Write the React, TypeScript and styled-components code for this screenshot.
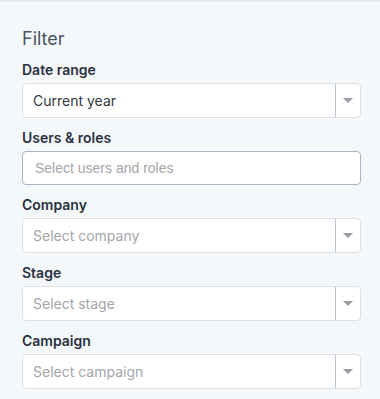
import React from "react";
import styled, { createGlobalStyle } from "styled-components";

const GlobalStyle = createGlobalStyle`
  html, body { margin: 0; padding: 0; }
  body {
    background: #f5f8fb;
    font-family: Inter, "Noto Sans", sans-serif;
  }
`;

const Panel = styled.div`
  width: 380px;
  height: 399px;
  box-sizing: border-box;
  background: #f5f8fb;
  border-top: 2px solid #e6eaef;
  padding: 26px 19px 0 22px;
  overflow: hidden;
`;

const Title = styled.h2`
  margin: 0 0 10px;
  font-size: 18px;
  line-height: 22px;
  font-weight: 400;
  color: #4a5261;
`;

const Group = styled.div`
  display: flex;
  flex-direction: column;
  margin-bottom: 10px;
`;

const Label = styled.label`
  font-size: 14px;
  line-height: 20px;
  font-weight: 600;
  color: #2a3140;
  margin-bottom: 3px;
`;

const SelectBox = styled.div`
  display: flex;
  align-items: stretch;
  height: 35px;
  box-sizing: border-box;
  background: #fff;
  border: 1px solid #dde1e6;
  border-radius: 4px;
`;

const Value = styled.div<{ $placeholder?: boolean }>`
  flex: 1;
  display: flex;
  align-items: center;
  padding-left: 10px;
  font-size: 14px;
  color: ${(p) => (p.$placeholder ? "#a3a6ab" : "#333840")};
`;

const ArrowZone = styled.div`
  width: 24px;
  display: flex;
  align-items: center;
  justify-content: center;
  border-left: 1px solid #b7c1ce;
`;

const Caret = styled.span`
  width: 0;
  height: 0;
  border-left: 5px solid transparent;
  border-right: 5px solid transparent;
  border-top: 5px solid #999da3;
`;

const TextInput = styled.input`
  height: 34px;
  box-sizing: border-box;
  background: #fff;
  border: 1px solid #a9b5c6;
  border-radius: 4px;
  padding: 0 12px;
  font-family: "Liberation Sans", Arial, sans-serif;
  font-size: 14px;
  color: #333840;
  outline: none;
  &::placeholder { color: #a3a6ab; }
`;

type SelectProps = { value?: string; placeholder: string };

const Select = ({ value, placeholder }: SelectProps) => (
  <SelectBox>
    <Value $placeholder={!value}>{value || placeholder}</Value>
    <ArrowZone>
      <Caret />
    </ArrowZone>
  </SelectBox>
);

export default function App() {
  return (
    <>
      <GlobalStyle />
      <Panel>
        <Title>Filter</Title>
        <Group>
          <Label>Date range</Label>
          <Select value="Current year" placeholder="Select date range" />
        </Group>
        <Group>
          <Label>Users &amp; roles</Label>
          <TextInput placeholder="Select users and roles" />
        </Group>
        <Group>
          <Label>Company</Label>
          <Select placeholder="Select company" />
        </Group>
        <Group>
          <Label>Stage</Label>
          <Select placeholder="Select stage" />
        </Group>
        <Group>
          <Label>Campaign</Label>
          <Select placeholder="Select campaign" />
        </Group>
      </Panel>
    </>
  );
}
